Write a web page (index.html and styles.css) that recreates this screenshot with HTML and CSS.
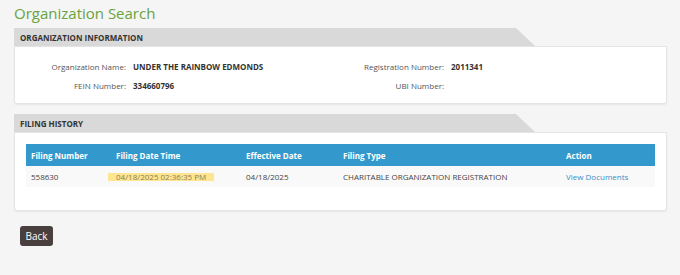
FILE: index.html
```html
<!DOCTYPE html>
<html lang="en">
<head>
    <meta charset="UTF-8">
    <meta name="viewport" content="width=device-width, initial-scale=1.0">
    <title>Organization Search</title>
    <link rel="stylesheet" href="styles.css">
</head>
<body>
    <div class="page">
        <h1>Organization Search</h1>

        <!-- organization info -->
        <div class="panel">
            <div class="panel-tab">ORGANIZATION INFORMATION</div>
            <div class="panel-body info-grid">
                <span class="label">Organization Name:</span>
                <span class="value">UNDER THE RAINBOW EDMONDS</span>
                <span class="label">Registration Number:</span>
                <span class="value">2011341</span>
                <span class="label">FEIN Number:</span>
                <span class="value">334660796</span>
                <span class="label">UBI Number:</span>
                <span class="value"></span>
            </div>
        </div>

        <!-- filing history -->
        <div class="panel">
            <div class="panel-tab">FILING HISTORY</div>
            <div class="panel-body history">
                <table class="filings">
                    <thead>
                        <tr>
                            <th class="c-num">Filing Number</th>
                            <th class="c-date">Filing Date Time</th>
                            <th class="c-eff">Effective Date</th>
                            <th class="c-type">Filing Type</th>
                            <th>Action</th>
                        </tr>
                    </thead>
                    <tbody>
                        <tr>
                            <td>558630</td>
                            <td><span class="mark">04/18/2025 02:36:35 PM</span></td>
                            <td>04/18/2025</td>
                            <td>CHARITABLE ORGANIZATION REGISTRATION</td>
                            <td><a href="#">View Documents</a></td>
                        </tr>
                    </tbody>
                </table>
            </div>
        </div>

        <button class="back-btn">Back</button>
    </div>
</body>
</html>
```

FILE: styles.css
```css
* {
    margin: 0;
    padding: 0;
    box-sizing: border-box;
}

body {
    background-color: #f5f5f5;
    font-family: 'Open Sans', sans-serif;
    color: #333;
    font-size: 8px;
}

.page {
    padding: 0 13px 0 14px;
}

h1 {
    font-size: 15px;
    font-weight: 400;
    color: #68a340;
    line-height: 24px;
    padding-top: 1px;
    margin-bottom: 3px;
}

.panel {
    margin-bottom: 10px;
}

.panel-tab {
    width: 521px;
    height: 18px;
    line-height: 19px;
    padding-left: 6px;
    background-color: #d9d9d9;
    font-weight: 700;
    color: #333;
    clip-path: polygon(0 0, calc(100% - 19px) 0, 100% 100%, 0 100%);
}

.panel-body {
    background-color: #fff;
    border: 1px solid #e4e4e4;
    border-radius: 0 0 3px 3px;
    box-shadow: 0 1px 2px rgba(0, 0, 0, 0.06);
}

.info-grid {
    display: grid;
    grid-template-columns: 111px 194px 110px 1fr;
    column-gap: 7px;
    row-gap: 8px;
    padding: 14px 0 15px;
    height: 58px;
    line-height: 11px;
}

.label {
    text-align: right;
    color: #555;
}

.value {
    font-weight: 700;
    color: #333;
}

.history {
    padding: 11px 11px 22px;
    height: 79px;
}

.filings {
    width: 100%;
    border-collapse: collapse;
}

.filings th {
    background-color: #3399cc;
    color: #fff;
    font-weight: 700;
    text-align: left;
    height: 22px;
    padding: 0 5px;
}

.filings td {
    background-color: #f9f9f9;
    height: 21px;
    padding: 0 5px;
    color: #444;
}

.c-num { width: 85px; }
.c-date { width: 130px; }
.c-eff { width: 97px; }
.c-type { width: 223px; }

.mark {
    display: inline-block;
    height: 8px;
    line-height: 8px;
    background-color: #fde68f;
    padding: 0 8px;
    margin-left: -8px;
    color: #907c55;
}

.filings a {
    color: #3a8ec6;
    text-decoration: none;
}

.back-btn {
    margin: 5px 0 0 6px;
    width: 33px;
    height: 20px;
    border: none;
    border-radius: 3px;
    background-color: #4a3f3f;
    color: #fff;
    font-family: 'Open Sans', sans-serif;
    font-size: 10px;
}
```
